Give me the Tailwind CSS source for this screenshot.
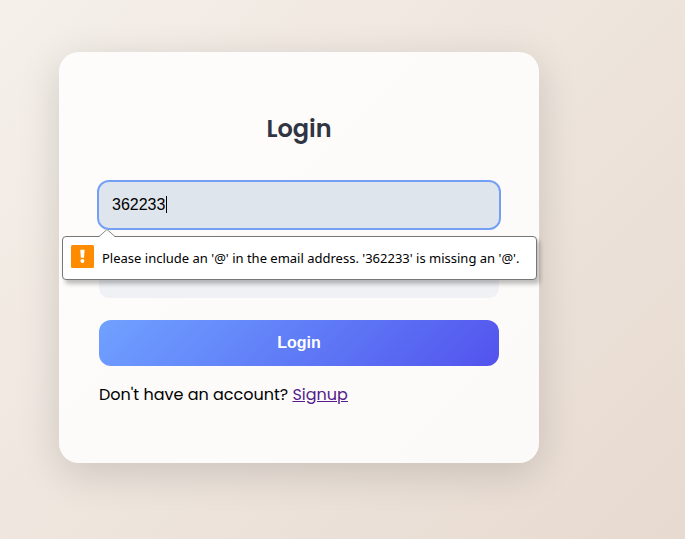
<!DOCTYPE html>
<html lang="en">
<head>
<meta charset="utf-8">
<meta name="viewport" content="width=device-width, initial-scale=1">
<title>Login</title>
<script src="https://cdn.jsdelivr.net/npm/@tailwindcss/browser@4"></script>
</head>
<body class="min-h-screen bg-linear-135 from-[#f5f0ea] to-[#e7dad0] pt-[52px] pr-[87px] pb-10 font-[Poppins,Inter,sans-serif] text-black">
  <main class="mx-auto w-full max-w-[480px] rounded-[20px] bg-white/85 px-10 pt-[59px] pb-[56px] shadow-[0_10px_40px_rgba(0,0,0,0.15)]">
    <h1 class="mb-[35px] text-center text-[24px] leading-9 font-semibold text-[#2f3542]">Login</h1>
    <form class="flex flex-col" novalidate>
      <div class="relative mb-6">
        <input id="email" type="text" inputmode="email" value="362233" aria-label="Email" aria-describedby="email-error" class="block h-[46px] w-full rounded-[10px] bg-[#dfe5ed] px-[13px] font-[Liberation_Sans,Arial,sans-serif] text-[16px] text-black caret-transparent outline-2 outline-[#73a0f5]">
        <span class="absolute top-[14px] left-[67px] h-[17px] w-px bg-black" aria-hidden="true"></span>
        <div id="email-error" role="alert" class="absolute top-[54px] -left-[37px] z-10 flex h-11 w-[475px] items-center gap-2 rounded-[4px] border border-[#777] bg-white px-2 whitespace-nowrap shadow-[3px_4px_4px_rgba(0,0,0,0.25)]">
          <svg class="absolute -top-2 left-9 h-2 w-4" viewBox="0 0 16 8" aria-hidden="true"><path d="M0 8 L8 0 L16 8Z" fill="#fff"/><path d="M0 7.5 L8 .5 L16 7.5" fill="none" stroke="#888"/></svg>
          <svg class="mb-1 size-[23px] shrink-0" viewBox="0 0 23 23" aria-hidden="true"><rect width="23" height="23" rx="1.5" fill="#ff8c00"/><path d="M9.3 4.8h4.2l-.5 8h-3.2z" fill="#fff"/><circle cx="11.4" cy="16" r="2" fill="#fff"/></svg>
          <span class="font-[Segoe_UI,Noto_Sans,sans-serif] text-[13px] leading-5">Please include an '@' in the email address. '362233' is missing an '@'.</span>
        </div>
      </div>
      <input id="password" type="password" aria-label="Password" class="mb-[22px] block h-[46px] w-full rounded-[10px] bg-[#f0f1f5] px-[13px] text-[16px] outline-none">
      <button type="submit" class="h-[46px] w-full rounded-xl bg-linear-135 from-[#70a1ff] to-[#5352ed] font-[Liberation_Sans,Arial,sans-serif] text-[16px] font-bold text-white">Login</button>
    </form>
    <p class="mt-[17px] text-[16px] leading-6">Don't have an account? <a href="#" class="text-[#551a8b] underline">Signup</a></p>
  </main>
</body>
</html>
